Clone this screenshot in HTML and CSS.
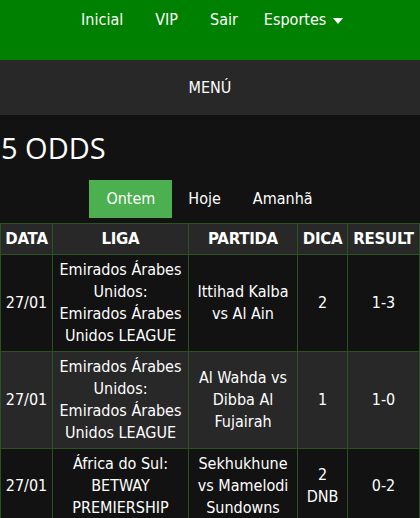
FILE: index.html
```html
<!DOCTYPE html>
<html lang="pt">
<head>
    <meta charset="UTF-8">
    <meta name="viewport" content="width=device-width, initial-scale=1.0">
    <title>5 ODDS</title>
    <link rel="stylesheet" href="styles.css">
</head>
<body>
    <nav class="topnav">
        <a href="#">Inicial</a>
        <a href="#">VIP</a>
        <a href="#">Sair</a>
        <a href="#" class="dropdown">Esportes <span class="caret"></span></a>
    </nav>

    <div class="menu-bar">MENÚ</div>

    <h1 class="title">5 ODDS</h1>

    <div class="tabs">
        <a href="#" class="tab active">Ontem</a>
        <a href="#" class="tab">Hoje</a>
        <a href="#" class="tab">Amanhã</a>
    </div>

    <table class="odds">
        <colgroup>
            <col class="c-data">
            <col class="c-liga">
            <col class="c-partida">
            <col class="c-dica">
            <col class="c-result">
        </colgroup>
        <thead>
            <tr>
                <th>DATA</th>
                <th>LIGA</th>
                <th>PARTIDA</th>
                <th>DICA</th>
                <th>RESULT</th>
            </tr>
        </thead>
        <tbody>
            <tr>
                <td>27/01</td>
                <td class="liga">Emirados Árabes Unidos: Emirados Árabes Unidos LEAGUE</td>
                <td>Ittihad Kalba vs Al Ain</td>
                <td>2</td>
                <td>1-3</td>
            </tr>
            <tr>
                <td>27/01</td>
                <td class="liga">Emirados Árabes Unidos: Emirados Árabes Unidos LEAGUE</td>
                <td>Al Wahda vs Dibba Al Fujairah</td>
                <td>1</td>
                <td>1-0</td>
            </tr>
            <tr>
                <td>27/01</td>
                <td class="liga">África do Sul: BETWAY PREMIERSHIP</td>
                <td>Sekhukhune vs Mamelodi Sundowns</td>
                <td>2 DNB</td>
                <td>0-2</td>
            </tr>
        </tbody>
    </table>
</body>
</html>
```

FILE: styles.css
```css
body {
    margin: 0;
    background-color: #121212;
    color: #fff;
    font-family: "DejaVu Sans Condensed", "DejaVu Sans", sans-serif;
    font-size: 16px;
}
a {
    color: #fff;
    text-decoration: none;
}
.topnav {
    height: 60px;
    background: #008000;
    display: flex;
    justify-content: center;
    align-items: flex-start;
    padding-left: 4px;
    box-sizing: border-box;
}
.topnav a {
    padding: 10px 16px;
    line-height: 20px;
}
.topnav .dropdown {
    padding-left: 10px;
}
.caret {
    display: inline-block;
    width: 0;
    height: 0;
    border-left: 5px solid transparent;
    border-right: 5px solid transparent;
    border-top: 6px solid #fff;
    vertical-align: middle;
    margin-left: 2px;
}
.menu-bar {
    background: #282828;
    height: 55px;
    line-height: 55px;
    text-align: center;
}
.title {
    margin: 13px 0 0 1px;
    font-family: "Open Sans", sans-serif;
    font-weight: normal;
    font-size: 29px;
    line-height: 40px;
}
.tabs {
    display: flex;
    justify-content: center;
    margin-top: 12px;
    margin-bottom: 5px;
    padding-right: 2px;
}
.tab {
    padding: 8px 16px;
    line-height: 22px;
}
.tab.active {
    background: #4caf50;
    padding-left: 17px;
    padding-right: 17px;
}
.odds {
    width: 419px;
    border-collapse: collapse;
    table-layout: fixed;
}
.c-data { width: 52px; }
.c-liga { width: 136px; }
.c-partida { width: 109px; }
.c-dica { width: 50px; }
.c-result { width: 72px; }
.odds th,
.odds td {
    border: 1px solid #2a5222;
    padding: 4px 2px;
    line-height: 22px;
    text-align: center;
}
.odds td.liga {
    padding-left: 5px;
    padding-right: 5px;
}
.odds th {
    font-family: "DejaVu Sans", sans-serif;
    font-size: 15px;
    font-weight: bold;
    background: #282828;
    letter-spacing: -0.3px;
}
.odds tbody tr:nth-child(even) {
    background: #282828;
}
.odds tbody tr:nth-child(odd) {
    background: #121212;
}
```
